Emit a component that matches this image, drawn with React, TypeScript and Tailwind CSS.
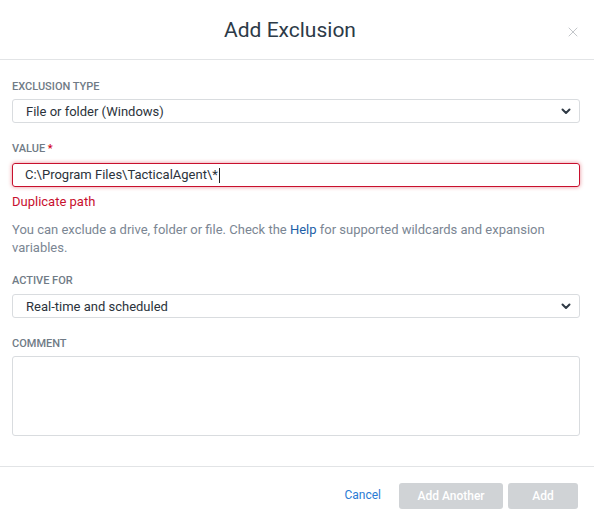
import { X } from 'lucide-react';

function Chevron() {
  return (
    <svg width="10" height="7" viewBox="0 0 10 7" className="shrink-0">
      <path d="M1.5 1.5 L5 5 L8.5 1.5" fill="none" stroke="#2f3a45" strokeWidth="2" strokeLinecap="round" strokeLinejoin="round" />
    </svg>
  );
}

function Label({ children }: { children: React.ReactNode }) {
  return <div className="text-[11px] leading-[14px] font-medium uppercase text-[#707b86]">{children}</div>;
}

function Select({ value }: { value: string }) {
  return (
    <div className="flex h-[24px] items-center justify-between rounded-[3px] border border-[#d9dcdf] pl-[13px] pr-[8px] pt-[1px] text-[13px] text-[#2b333b]">
      <span>{value}</span>
      <Chevron />
    </div>
  );
}

export default function App() {
  return (
    <div className="w-[594px] h-[525px] bg-white font-['Roboto',sans-serif] flex flex-col">
      {/* Header */}
      <div className="relative flex h-[60px] shrink-0 items-center justify-center border-b border-[#e2e4e6] pr-[14px]">
        <h1 className="text-[21px] text-[#2c3a47] pt-[3px]">Add Exclusion</h1>
        <X className="absolute right-[13px] top-[24px] text-[#b9bdc1]" size={16} strokeWidth={1.3} />
      </div>

      {/* Body */}
      <div className="flex flex-col pl-[12px] pr-[14px] pt-[20px] pb-[30px] border-b border-[#e2e4e6]">
        <Label>Exclusion type</Label>
        <div className="mt-[5px]">
          <Select value="File or folder (Windows)" />
        </div>

        <div className="mt-[19px]">
          <Label>
            Value <span className="text-[#d0021b]">*</span>
          </Label>
        </div>
        <div className="mt-[7px] flex h-[24px] items-center rounded-[3px] border border-[#c8102e] pl-[12px] text-[13px] text-[#2b333b] shadow-[0_0_4px_rgba(208,2,27,0.45)]">
          <span>C:\Program Files\TacticalAgent\*</span>
          <span className="ml-[1px] inline-block h-[15px] w-px bg-[#222]" />
        </div>
        <div className="mt-[6px] text-[13px] leading-[18px] text-[#c8102e]">Duplicate path</div>

        <p className="mt-[10px] text-[13px] leading-[18px] text-[#7b8693]">
          You can exclude a drive, folder or file. Check the <a className="text-[#1e5fa8]">Help</a> for supported wildcards and expansion variables.
        </p>

        <div className="mt-[17px]">
          <Label>Active for</Label>
        </div>
        <div className="mt-[6px]">
          <Select value="Real-time and scheduled" />
        </div>

        <div className="mt-[19px]">
          <Label>Comment</Label>
        </div>
        <div className="mt-[5px] h-[80px] rounded-[3px] border border-[#d9dcdf]" />
      </div>

      {/* Footer */}
      <div className="flex items-center justify-end gap-[5px] pr-[16px] pt-[16px]">
        <button className="mr-[13px] mb-[2px] text-[12px] text-[#2a7bd4]">Cancel</button>
        <button className="h-[26px] w-[104px] rounded-[3px] bg-[#d0d3d6] text-[12px] font-medium text-white">Add Another</button>
        <button className="h-[26px] w-[70px] rounded-[3px] bg-[#d0d3d6] text-[12px] font-medium text-white">Add</button>
      </div>
    </div>
  );
}
